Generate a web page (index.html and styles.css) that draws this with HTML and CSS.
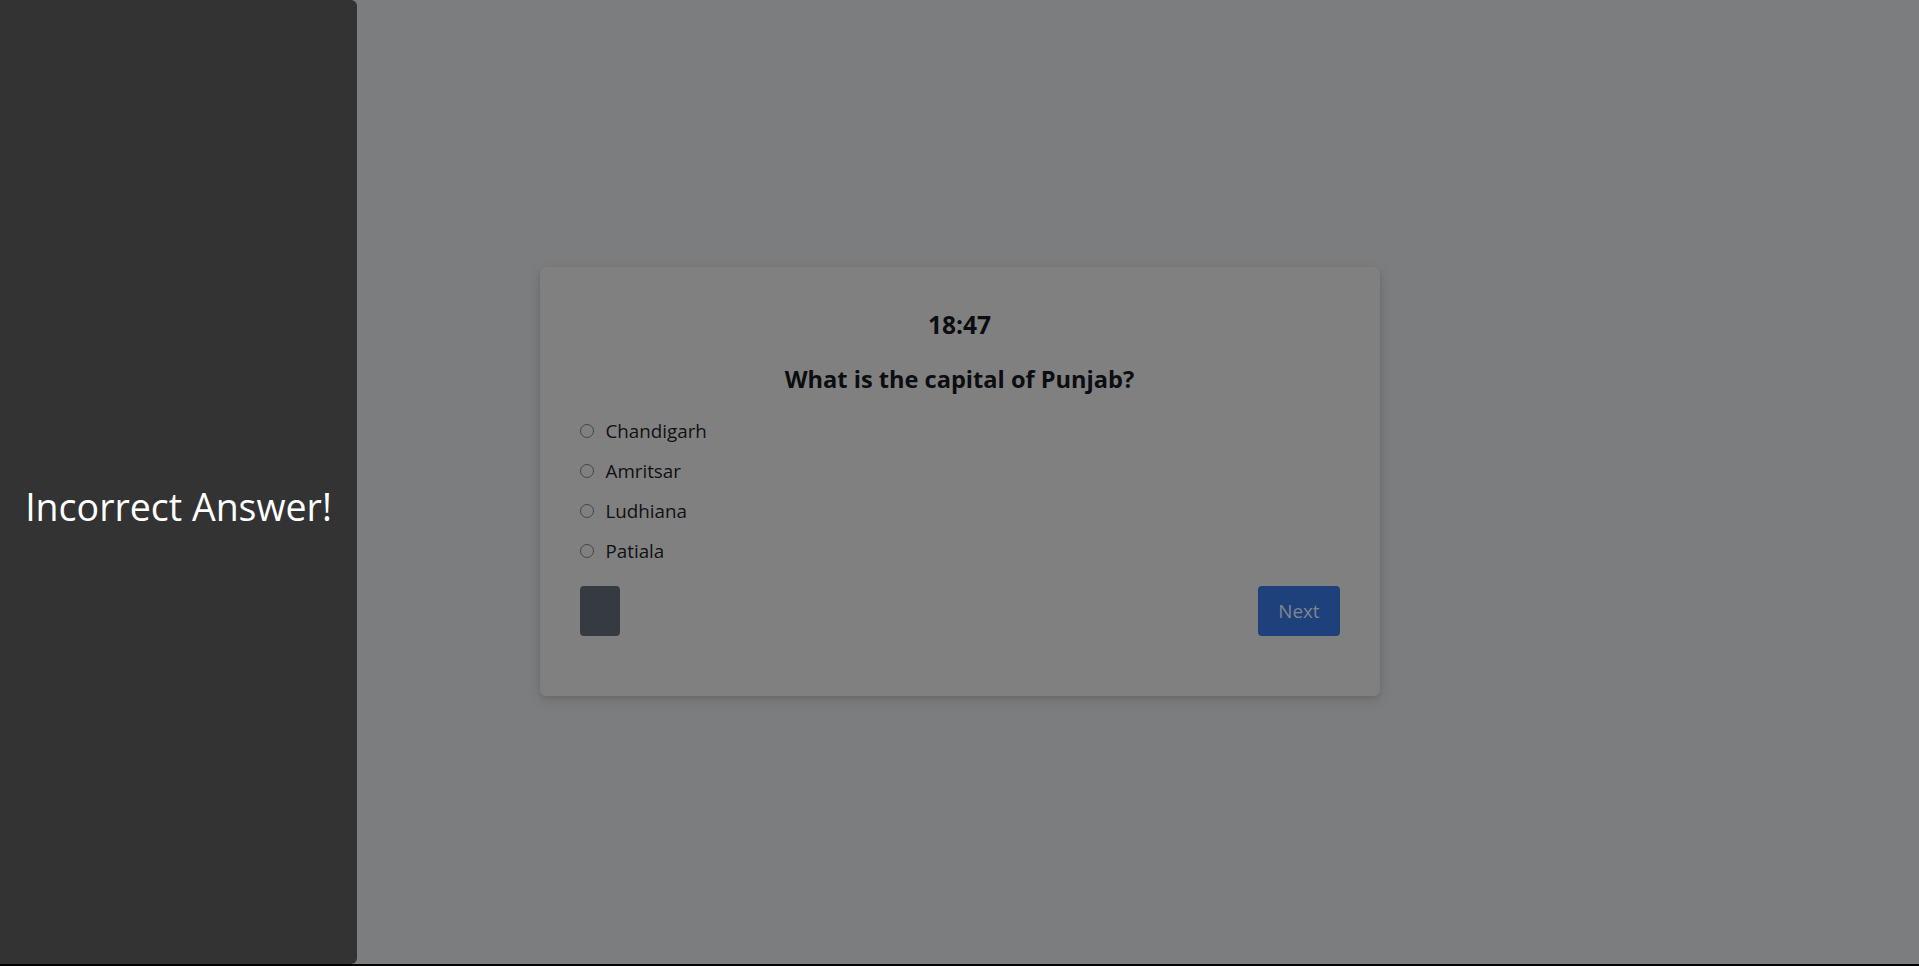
FILE: index.html
```html
<!DOCTYPE html>
<html lang="en">
<head>
<meta charset="utf-8">
<title>Quiz</title>
<link rel="stylesheet" href="styles.css">
</head>
<body>
<div class="page">
  <main class="stage">
    <section class="card">
      <div class="timer">18:47</div>
      <h2 class="question">What is the capital of Punjab?</h2>
      <div class="options">
        <label class="option"><input type="radio" name="q" class="radio"><span>Chandigarh</span></label>
        <label class="option"><input type="radio" name="q" class="radio"><span>Amritsar</span></label>
        <label class="option"><input type="radio" name="q" class="radio"><span>Ludhiana</span></label>
        <label class="option"><input type="radio" name="q" class="radio"><span>Patiala</span></label>
      </div>
      <div class="actions">
        <button class="btn btn-back" type="button"></button>
        <button class="btn btn-next" type="button">Next</button>
      </div>
    </section>
  </main>
  <aside class="feedback">
    <p class="feedback-text">Incorrect Answer!</p>
  </aside>
</div>
</body>
</html>
```

FILE: styles.css
```css
* { box-sizing: border-box; }
html, body { margin: 0; padding: 0; }
body {
  background: #000;
  font-family: "Open Sans", "Noto Sans", sans-serif;
  color: #0e1116;
}
.page {
  position: relative;
  height: 964px;
  background: #7c7d7f;
  overflow: hidden;
}
.stage {
  height: 100%;
  display: flex;
  align-items: center;
  justify-content: center;
  padding-bottom: 2px;
}
.card {
  width: 840px;
  height: 429px;
  background: #808080;
  border-radius: 6px;
  box-shadow: 0 4px 14px rgba(0,0,0,0.12), 0 2px 4px rgba(0,0,0,0.08);
  padding: 40px;
}
.timer {
  text-align: center;
  font-size: 24.5px;
  line-height: 32px;
  font-weight: 700;
  color: #0b0d10;
  padding-top: 2px;
  margin-bottom: 22px;
}
.question {
  margin: 0 0 22px;
  text-align: center;
  font-size: 23.6px;
  line-height: 32px;
  font-weight: 700;
  color: #0b0d10;
}
.options {
  display: flex;
  flex-direction: column;
  gap: 12px;
  margin-bottom: 21px;
}
.option {
  display: flex;
  align-items: center;
  height: 28px;
  font-size: 18.8px;
  line-height: 28px;
  color: #0f1114;
}
.radio {
  appearance: none;
  -webkit-appearance: none;
  width: 14px;
  height: 14px;
  margin: 0 12px 0 0;
  border: 1px solid #454545;
  border-radius: 50%;
  background: transparent;
  flex: none;
}
.actions {
  display: flex;
  justify-content: space-between;
}
.btn {
  border: none;
  border-radius: 4px;
  padding: 11px 20px;
  font-family: inherit;
  font-size: 18.8px;
  line-height: 28px;
  margin: 0;
}
.btn-back {
  background: #363a41;
}
.btn-next {
  background: #1e417c;
  color: #80858e;
}
.feedback {
  position: absolute;
  left: 0;
  top: 0;
  bottom: 0;
  width: 357px;
  background: #333333;
  border-radius: 0 6px 6px 0;
  display: flex;
  align-items: center;
  justify-content: center;
  padding-top: 50px;
}
.feedback-text {
  margin: 0;
  color: #fff;
  font-size: 37.5px;
  line-height: 44px;
  font-weight: 400;
  white-space: nowrap;
}
```
